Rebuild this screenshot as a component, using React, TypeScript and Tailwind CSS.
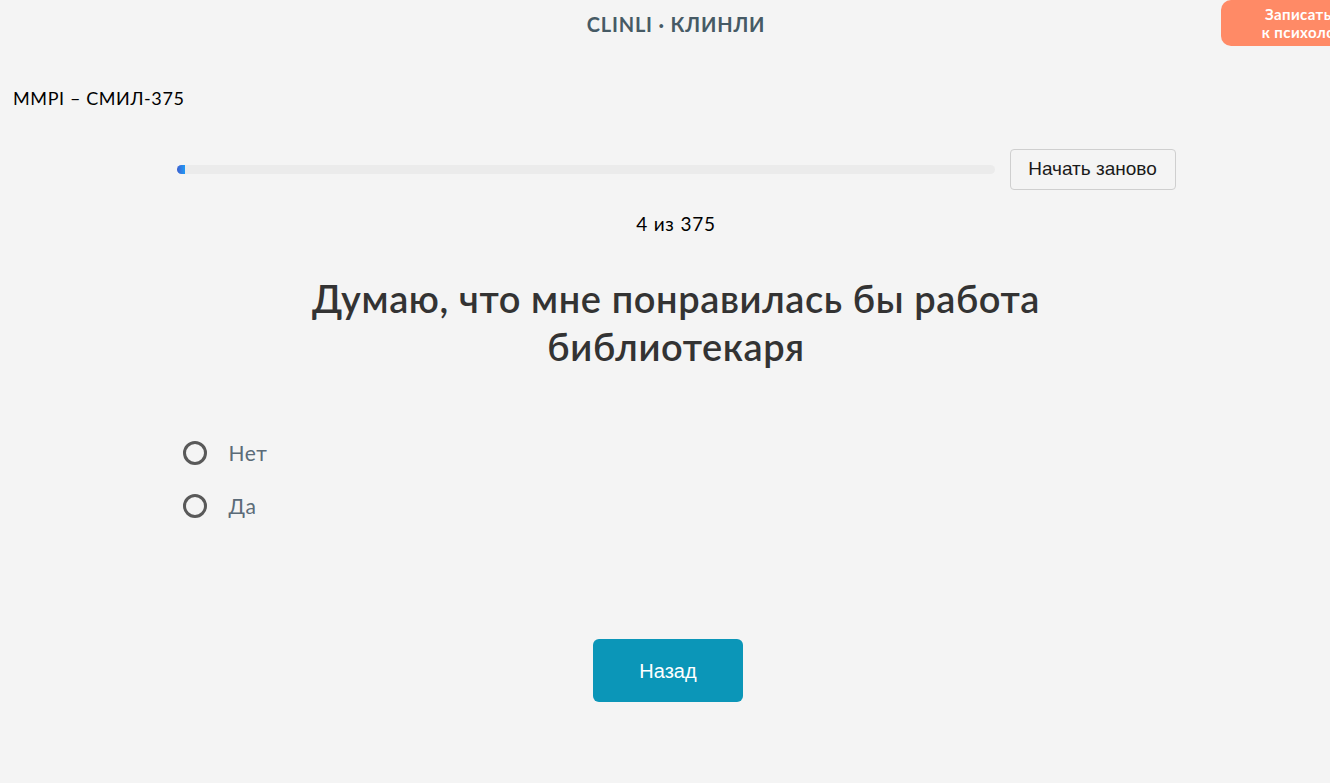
import { useState } from "react";

const ANSWERS = ["Нет", "Да"];

function Radio({ label, checked, onSelect }: { label: string; checked: boolean; onSelect: () => void }) {
  return (
    <label className="flex h-[53px] cursor-pointer items-center pl-[6px]" onClick={onSelect}>
      <span className="flex h-[24px] w-[24px] items-center justify-center rounded-full border-[3px] border-[#595959]">
        {checked && <span className="h-[10px] w-[10px] rounded-full bg-[#595959]" />}
      </span>
      <span className="ml-[22px] text-[21px] tracking-[0.6px] text-[#5b6b78]">{label}</span>
    </label>
  );
}

export default function App() {
  const [answer, setAnswer] = useState<number | null>(null);
  const current = 4;
  const total = 375;

  return (
    <div className="relative min-h-screen w-full overflow-hidden bg-[#f4f4f4] font-['Lato',sans-serif]">
      <div className="w-[1352px] pb-[80px]">
        <header className="flex h-[48px] items-center justify-center">
          <span className="text-[20px] font-bold tracking-[0.8px] text-[#465a65]">CLINLI · КЛИНЛИ</span>
        </header>

        <h1 className="mt-[38px] pl-[13px] text-[18px] leading-[24px] tracking-[0.6px] text-black">MMPI – СМИЛ-375</h1>

        <main className="mx-auto mt-[39px] w-[999px]">
          <div className="flex items-center gap-[15px]">
            <div className="h-[9px] flex-1 rounded-full bg-[#ebebeb]">
              <div
                className="h-full rounded-l-full bg-gradient-to-r from-[#3a5fd0] to-[#1b9af5]"
                style={{ width: `${Math.max(8, ((current - 4) / total) * 818)}px` }}
              />
            </div>
            <button className="h-[41px] w-[166px] rounded-[4px] border border-[#cfcfcf] bg-[#f4f4f4] font-['Liberation_Sans',sans-serif] text-[19px] text-[#1a1a1a]">
              Начать заново
            </button>
          </div>

          <p className="mt-[22px] text-center text-[19px] leading-[24px] tracking-[0.8px] text-black">
            {current} из {total}
          </p>

          <h2 className="mx-auto mt-[38px] w-[800px] text-center text-[38px] font-semibold leading-[48px] tracking-[0.6px] text-[#333333]">
            Думаю, что мне понравилась бы работа библиотекаря
          </h2>

          <div className="mt-[56px]">
            {ANSWERS.map((a, i) => (
              <Radio key={a} label={a} checked={answer === i} onSelect={() => setAnswer(i)} />
            ))}
          </div>

          <div className="mt-[107px] flex justify-center pr-[16px]">
            <button className="h-[63px] w-[150px] rounded-[6px] bg-[#0b96b8] font-['Liberation_Sans',sans-serif] text-[20px] text-white">
              Назад
            </button>
          </div>
        </main>
      </div>

      <button className="absolute left-[1221px] top-0 h-[46px] w-[170px] rounded-[10px] bg-[#ff8a66] text-[15px] font-bold leading-[18px] tracking-[0.4px] text-white">
        Записаться
        <br />к психологу
      </button>
    </div>
  );
}
